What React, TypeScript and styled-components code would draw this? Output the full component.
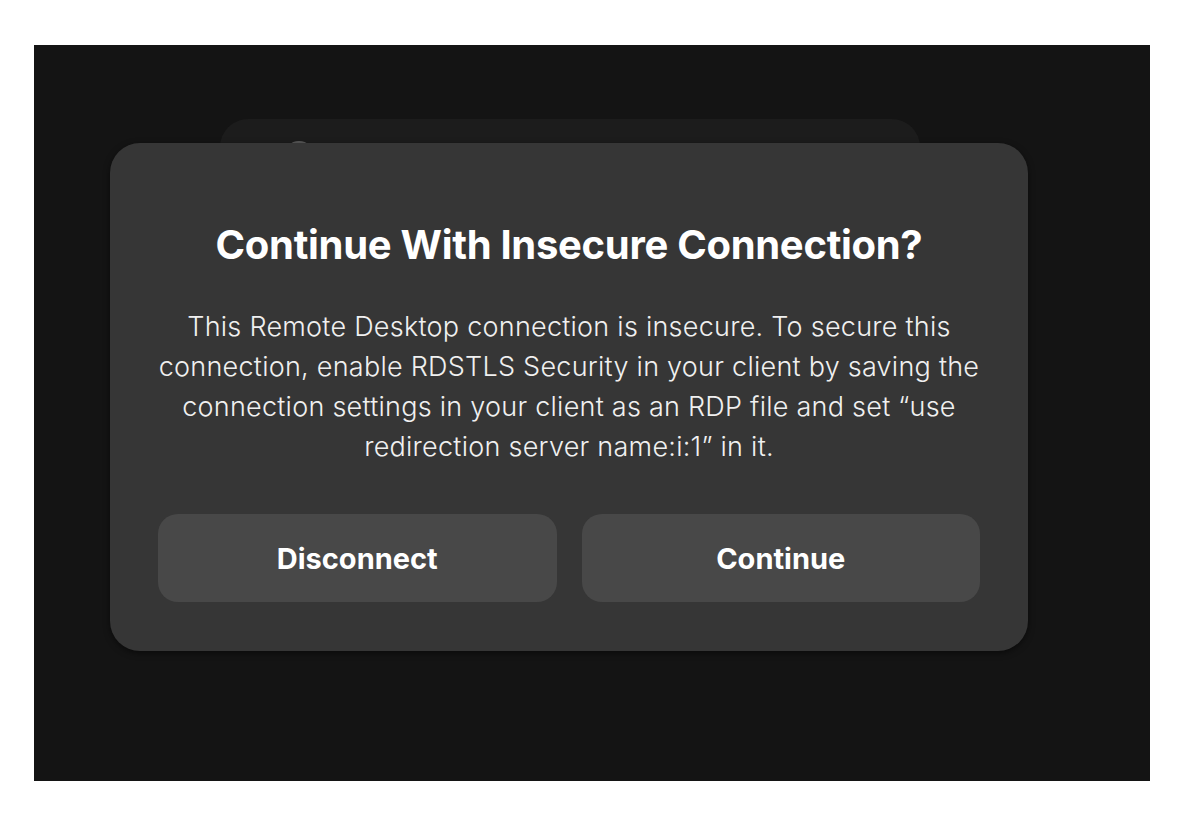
import React from "react";
import styled, { createGlobalStyle } from "styled-components";

const Global = createGlobalStyle`
  html, body { margin: 0; padding: 0; background: #ffffff; }
  body { width: 1196px; height: 816px; overflow: hidden; font-family: Inter, "Noto Sans", sans-serif; }
`;

const Page = styled.div`
  width: 1196px;
  height: 816px;
  padding: 45px 46px 35px 34px;
  box-sizing: border-box;
  background: #ffffff;
`;

const Screen = styled.div`
  position: relative;
  width: 1116px;
  height: 736px;
  background: #141414;
  overflow: hidden;
`;

const BackCard = styled.div`
  position: absolute;
  left: 186px;
  top: 74px;
  width: 700px;
  height: 120px;
  background: #1c1c1c;
  border-radius: 28px;
`;

const Avatar = styled.div`
  position: absolute;
  left: 64px;
  top: 22px;
  width: 30px;
  height: 30px;
  border-radius: 50%;
  background: #5a5a5a;
`;

const Dialog = styled.div`
  position: absolute;
  left: 76px;
  top: 98px;
  width: 918px;
  height: 508px;
  box-sizing: border-box;
  background: #363636;
  border-radius: 30px;
  box-shadow: 0 2px 6px rgba(0, 0, 0, 0.5);
  padding: 78px 48px 48px;
  display: flex;
  flex-direction: column;
  align-items: center;
  color: #ffffff;
`;

const Title = styled.h1`
  margin: 0;
  font-family: Inter, "Noto Sans", sans-serif;
  font-weight: 700;
  font-size: 40px;
  line-height: 48px;
  letter-spacing: -0.3px;
  text-align: center;
  white-space: nowrap;
`;

const Body = styled.p`
  margin: 38px 0 0;
  font-family: Inter, "Noto Sans", sans-serif;
  font-weight: 300;
  font-size: 27px;
  line-height: 40px;
  letter-spacing: 0.25px;
  text-align: center;
  white-space: nowrap;
  color: #f0f0f0;
`;

const Actions = styled.div`
  margin-top: 47px;
  width: 100%;
  display: grid;
  grid-template-columns: 1fr 1fr;
  gap: 25px;
`;

const Button = styled.button`
  height: 88px;
  border: none;
  border-radius: 20px;
  background: #484848;
  color: #ffffff;
  font-family: Inter, "Noto Sans", sans-serif;
  font-weight: 700;
  font-size: 29px;
  cursor: pointer;
`;

export default function App() {
  return (
    <>
      <Global />
      <Page>
        <Screen>
          <BackCard>
            <Avatar />
          </BackCard>
          <Dialog>
            <Title>Continue With Insecure Connection?</Title>
            <Body>
              This Remote Desktop connection is insecure. To secure this
              <br />
              connection, enable RDSTLS Security in your client by saving the
              <br />
              connection settings in your client as an RDP file and set “use
              <br />
              redirection server name:i:1” in it.
            </Body>
            <Actions>
              <Button>Disconnect</Button>
              <Button>Continue</Button>
            </Actions>
          </Dialog>
        </Screen>
      </Page>
    </>
  );
}
